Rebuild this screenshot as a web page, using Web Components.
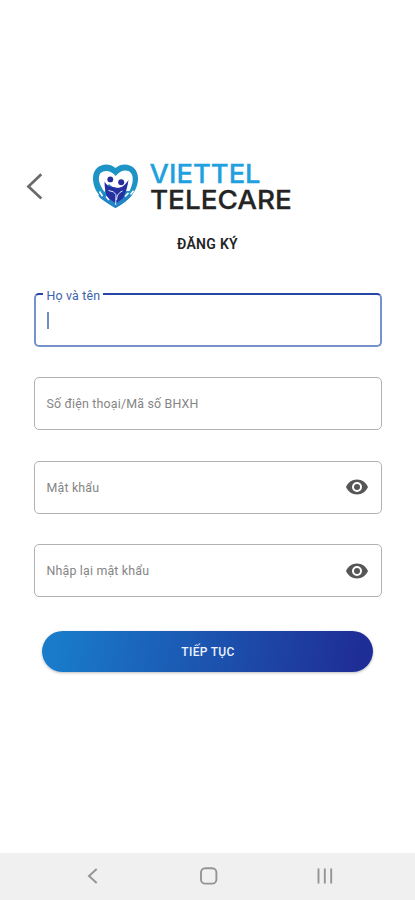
<!DOCTYPE html>
<html lang="vi">
<head>
<meta charset="utf-8">
<title>Đăng ký</title>
<style>html,body{margin:0;height:100%;background:#fff}</style>
</head>
<body>
<register-screen></register-screen>
<script>
function define(name, html, setup) {
  const tpl = document.createElement('template');
  tpl.innerHTML = html;
  customElements.define(name, class extends HTMLElement {
    constructor() {
      super();
      this.attachShadow({ mode: 'open' }).append(tpl.content.cloneNode(true));
    }
    connectedCallback() { if (setup) setup(this, this.shadowRoot); }
  });
}

define('back-button', `
<style>:host{display:block;width:50px;height:60px}svg{display:block}</style>
<svg width="50" height="60" viewBox="0 0 50 60" fill="none" stroke="#6a6a6a" stroke-width="2.7"><path d="M41.3 18.2 28.4 30.4 41.3 42.6"/></svg>`);

define('brand-logo', `
<style>
:host{display:flex;align-items:flex-start}
svg{display:block}
text{font-family:Inter,"Liberation Sans",sans-serif;font-size:24px;font-weight:500;stroke-width:.25}
</style>
<svg width="208" height="60" viewBox="90 156 208 60">
  <path d="M115.5 208C107 203 93 194 93 178.5C93 165 107 161 115.5 168C124 161 138 165 138 178.5C138 194 124 203 115.5 208Z" fill="#1e94c6"/>
  <path d="M115.5 208C107 203 101.500 200 98 195.500L105 193.500 114.500 202 125 195 133 193.500C128 201 121 205 115.500 208Z" fill="#2385c8"/>
  <path d="M100.500 173C105 169.500 111 170.500 115.700 176C121 170 127 169 131 173C134 177 133 184 129.500 191L124 191 121.500 187 116 190 109 184 104.500 192C99.500 185 97 178 100.500 173Z" fill="#fff"/>
  <circle cx="110.300" cy="179.400" r="2.900" fill="#252e98"/>
  <circle cx="121.200" cy="182.300" r="3" fill="#252e98"/>
  <path d="M104.500 181.500C107 186 110.500 187 115 187.200C118 188.300 123 188.500 128.500 180C127.500 187 125.500 194 122.800 198.500L116 203.200 107.800 198C105.600 194 104.500 188 104.500 181.500Z" fill="#2630a0"/>
  <path d="M108.500 190.500Q114 191 116 194.500L115.700 205M122.500 191Q117 193 116.500 200" fill="none" stroke="#dcecf9" stroke-width="1"/>
  <path d="M99.500 191.500 102.500 196.200M106 196.500 109 200M125 196.500 128.500 193M130.500 194.500 133.500 190.800" stroke="#fff" stroke-width="1.600"/>
  <text transform="translate(149.600 182.800) scale(1 1.090)" textLength="111" lengthAdjust="spacingAndGlyphs" fill="#20a0df" stroke="#20a0df">VIETTEL</text>
  <text transform="translate(149.900 209.300) scale(1 1.090)" textLength="142" lengthAdjust="spacingAndGlyphs" fill="#242424" stroke="#242424">TELECARE</text>
</svg>`);

define('text-field', `
<style>
:host{display:block;width:348px;height:53px}
fieldset{box-sizing:border-box;width:100%;height:100%;margin:0;padding:0 13px 0 12px;border:1.500px solid #b2b2b2;border-radius:5px;display:flex;align-items:center;justify-content:space-between;font:12.400px Roboto,"Noto Sans",sans-serif;letter-spacing:.18px;color:#858585;min-width:0}
legend{display:none}
.caret{display:none;width:2px;height:17px;background:#6d8cc8}
:host([focused]) fieldset{display:block;height:60px;margin-top:-7px;padding:0 11px;border:2px solid #7792c8;border-top-color:#2745a6;color:#3d62ad}
:host([focused]) legend{display:block;height:14px;line-height:18px;padding:0 3px 0 4px;margin-left:-4px}
:host([focused]) .caret{display:block;margin:11px 0 0 0}
:host([focused]) .hint{display:none}
</style>
<fieldset><legend></legend><div class="caret"></div><span class="hint"></span><slot></slot></fieldset>`, (el, root) => {
  const focused = el.hasAttribute('focused');
  root.querySelector(focused ? 'legend' : '.hint').textContent = el.getAttribute('label');
});

define('eye-icon', `
<style>:host{display:block;width:22px;height:16px}svg{display:block}</style>
<svg width="22" height="16" viewBox="0 0 22 16"><path fill="#565656" fill-rule="evenodd" d="M11 .5C6 .5 1.800 3.500 0 8c1.800 4.500 6 7.500 11 7.500S20.200 12.500 22 8C20.200 3.500 16 .5 11 .5ZM11 13a5 5 0 1 1 0-10 5 5 0 0 1 0 10Z"/><circle cx="11" cy="8" r="3" fill="#565656"/></svg>`);

define('primary-button', `
<style>
:host{display:block;width:331px;height:41px}
button{display:block;width:100%;height:100%;padding:2px 0 0 1px;border:0;border-radius:20.500px;background:linear-gradient(100deg,#197bca 5%,#1f2d96 96%);box-shadow:0 1px 3px #0004;color:#edf3ff;font:500 12px Roboto,"Noto Sans",sans-serif;letter-spacing:.3px}
</style>
<button><slot></slot></button>`);

define('system-nav', `
<style>
:host{display:flex;justify-content:space-between;align-items:center;box-sizing:border-box;height:47px;padding:0 81px 1px 87px;background:#f0f0f0}
svg{display:block}
.home{margin-left:2px}
</style>
<svg width="12" height="18" viewBox="0 0 12 18" fill="none" stroke="#949494" stroke-width="1.900"><path d="M9.700 2 2 9 9.700 16"/></svg>
<svg class="home" width="18" height="18" viewBox="0 0 18 18" fill="none" stroke="#949494" stroke-width="1.900"><rect x="1" y="1.200" width="15.400" height="15.400" rx="4.200"/></svg>
<svg width="18" height="18" viewBox="0 0 18 18" stroke="#949494" stroke-width="1.900"><path d="M2.500 1.500V16.500M8.800 1.500V16.500M15.200 1.500V16.500"/></svg>`);

define('register-screen', `
<style>
:host{display:flex;flex-direction:column;box-sizing:border-box;width:415px;height:900px;padding-top:156px;background:#fff}
header{display:flex;gap:40px;height:60px}
h1{margin:18px 0 0;height:19px;text-align:center;font:600 14px/20px Roboto,"Noto Sans",sans-serif;letter-spacing:.3px;color:#242424}
form{display:flex;flex-direction:column;align-items:center;gap:30.400px;margin-top:41px}
primary-button{margin-top:3px}
system-nav{margin-top:auto}
</style>
<header><back-button></back-button><brand-logo></brand-logo></header>
<h1>ĐĂNG KÝ</h1>
<form>
  <text-field focused label="Họ và tên"></text-field>
  <text-field label="Số điện thoại/Mã số BHXH"></text-field>
  <text-field label="Mật khẩu"><eye-icon></eye-icon></text-field>
  <text-field label="Nhập lại mật khẩu"><eye-icon></eye-icon></text-field>
  <primary-button>TIẾP TỤC</primary-button>
</form>
<system-nav></system-nav>`);
</script>
</body>
</html>
